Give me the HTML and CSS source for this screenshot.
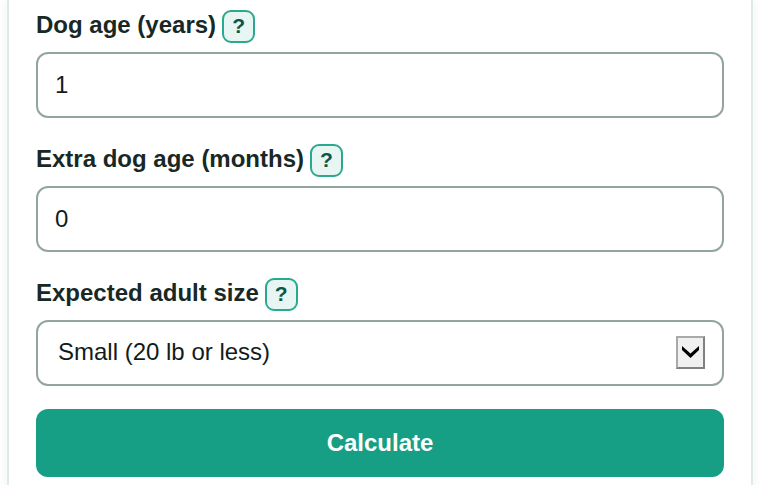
FILE: index.html
```html
<!DOCTYPE html>
<html lang="en">
<head>
  <meta charset="UTF-8">
  <meta name="viewport" content="width=device-width, initial-scale=1.0">
  <title>Dog Age Calculator</title>
  <link rel="stylesheet" href="styles.css">
</head>
<body>
  <form class="card">
    <div class="field">
      <div class="field-head">
        <label for="years">Dog age (years)</label>
        <button type="button" class="help" aria-label="Help: dog age in years">?</button>
      </div>
      <input type="text" inputmode="numeric" id="years" class="control" value="1">
    </div>
    <div class="field">
      <div class="field-head">
        <label for="months">Extra dog age (months)</label>
        <button type="button" class="help" aria-label="Help: extra months">?</button>
      </div>
      <input type="text" inputmode="numeric" id="months" class="control" value="0">
    </div>
    <div class="field">
      <div class="field-head">
        <label for="size">Expected adult size</label>
        <button type="button" class="help" aria-label="Help: expected adult size">?</button>
      </div>
      <div class="select-wrap">
        <select id="size" class="control">
          <option selected>Small (20 lb or less)</option>
          <option>Medium (21 to 50 lb)</option>
          <option>Large (51 to 100 lb)</option>
          <option>Giant (over 100 lb)</option>
        </select>
        <span class="arrow">
          <svg width="17" height="12" viewBox="0 0 17 12" aria-hidden="true">
            <path d="M0 0 L8.5 7.5 L17 0 V4 L8.5 12 L0 4 Z" fill="#000"/>
          </svg>
        </span>
      </div>
    </div>
    <button type="button" class="calculate">Calculate</button>
  </form>
</body>
</html>
```

FILE: styles.css
```css
* {
  box-sizing: border-box;
}
body {
  margin: 0;
  padding: 0 7px;
  background-color: #fdfefe;
  color: #182825;
  font-family: "Liberation Sans", Arial, sans-serif;
  font-size: 24px;
  overflow: hidden;
}
.card {
  padding: 10px 27px 28px;
  background-color: #fff;
  border: solid #dfe9e6;
  border-width: 0 2px;
  box-shadow: 0 0 8px rgba(24, 80, 68, 0.06);
}
.field {
  margin-bottom: 26px;
}
.field:last-of-type {
  margin-bottom: 23px;
}
.field-head {
  display: flex;
  align-items: center;
  gap: 6px;
  margin-bottom: 9px;
}
.field-head label {
  padding-bottom: 4px;
  line-height: 28px;
  font-weight: bold;
}
.help {
  width: 33px;
  height: 33px;
  padding: 0 0 2px;
  border: 2px solid #2aa98e;
  border-radius: 9px;
  background-color: #e8f6f3;
  color: #0d5749;
  font: bold 21px "Liberation Sans", Arial, sans-serif;
}
.control {
  display: block;
  width: 100%;
  height: 66px;
  padding: 0 17px;
  border: 2px solid #94a5a0;
  border-radius: 12px;
  background-color: #fff;
  color: #111c1a;
  font: 24px "Liberation Sans", Arial, sans-serif;
}
select.control {
  padding: 0 60px 3px 20px;
  appearance: none;
}
.select-wrap {
  position: relative;
}
.arrow {
  display: flex;
  justify-content: center;
  position: absolute;
  top: 16px;
  right: 19px;
  width: 29px;
  height: 33px;
  padding-top: 8px;
  border: 2px solid;
  border-color: #a9a9a9 #808080 #808080 #a9a9a9;
  background-color: #f0f0f0;
  pointer-events: none;
}
.calculate {
  display: block;
  width: 100%;
  height: 68px;
  border: 0;
  border-radius: 12px;
  background-color: #179f85;
  color: #fff;
  font: bold 24px "Liberation Sans", Arial, sans-serif;
}
```
